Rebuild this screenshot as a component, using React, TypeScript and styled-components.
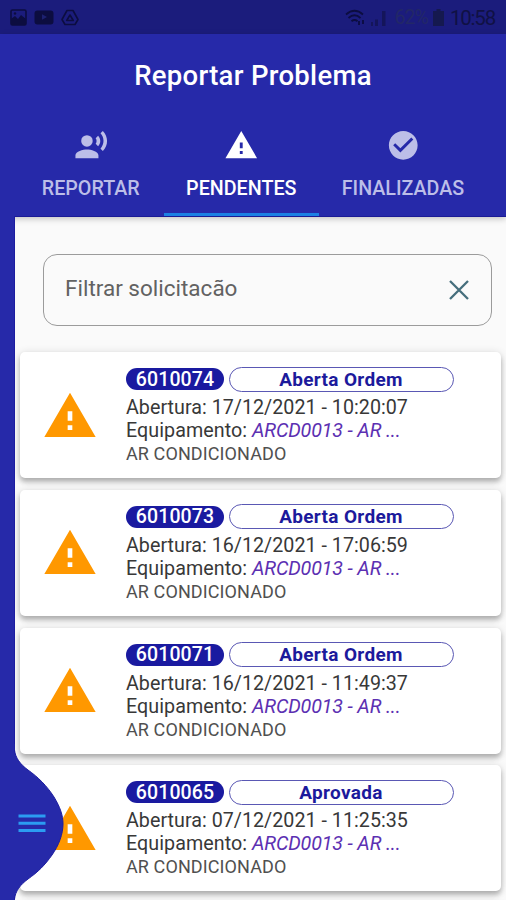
import React from "react";
import styled, { createGlobalStyle, css } from "styled-components";
import { MdRecordVoiceOver, MdWarning, MdCheckCircle } from "react-icons/md";

const GlobalStyle = createGlobalStyle`
  * { box-sizing: border-box; }
  body { margin: 0; overflow: hidden; font-family: Roboto, "Liberation Sans", sans-serif; }
`;

const Screen = styled.div`
  position: relative;
  width: 506px;
  height: 900px;
  overflow: hidden;
  display: flex;
  flex-direction: column;
  background: #fafafa;
`;

const StatusBar = styled.div`
  flex: none;
  height: 34px;
  padding: 1px 11px 0 10px;
  display: flex;
  align-items: center;
  justify-content: space-between;
  background: #1b1c7c;
  color: #0c0d40;
`;

const StatusGroup = styled.div<{ $gap: number }>`
  display: flex;
  align-items: center;
  gap: ${(p) => p.$gap}px;
`;

const Percent = styled.span`
  margin: 0 5px 0 4px;
  font-size: 19.5px;
  letter-spacing: -0.9px;
  color: #222768;
`;

const Clock = styled.span`
  margin-left: 6px;
  font-size: 20.5px;
  letter-spacing: -1.2px;
  color: #101144;
`;

const AppBar = styled.header`
  position: relative;
  z-index: 1;
  flex: none;
  height: 183px;
  display: flex;
  flex-direction: column;
  background: #2629a9;
  border-bottom: 1px solid #1a1a96;
  box-shadow: 0 2px 6px rgba(0, 0, 0, 0.22);
`;

const Title = styled.h1`
  margin: 0;
  height: 83px;
  line-height: 83px;
  text-align: center;
  font-size: 27.5px;
  font-weight: 500;
  letter-spacing: 0.3px;
  color: #fff;
`;

const Tabs = styled.nav`
  display: flex;
  padding-left: 18px;
  height: 99px;
`;

const Tab = styled.div<{ $width: number; $active?: boolean }>`
  width: ${(p) => p.$width}px;
  display: flex;
  flex-direction: column;
  align-items: center;
  padding-top: 11px;
  color: ${(p) => (p.$active ? "#fff" : "#bcbee8")};
  border-bottom: 3px solid ${(p) => (p.$active ? "#1b80e4" : "transparent")};
  svg { width: 34.5px; height: 34.5px; flex: none; }
`;

const TabLabel = styled.span`
  margin-top: 13.5px;
  font-size: 19.7px;
  line-height: 26px;
  font-weight: 500;
`;

const Body = styled.div`
  flex: 1;
  min-height: 0;
  display: flex;
`;

const DrawerEdge = styled.div`
  flex: none;
  width: 15px;
  background: #2629a9;
  border-right: 1px solid #1c1ca0;
  position: relative;
  z-index: 2;
  margin-top: -1px;
`;

const Content = styled.main`
  flex: 1;
  min-width: 0;
  padding: 37px 5px 0;
`;

const SearchField = styled.div`
  height: 72px;
  margin: 0 9px 0 23px;
  padding: 0 21px;
  display: flex;
  align-items: center;
  justify-content: space-between;
  border: 1.5px solid #9b9b9b;
  border-radius: 14px;
  font-size: 22.5px;
  color: #626262;
`;

const Placeholder = styled.span`
  padding-bottom: 4px;
`;

const List = styled.div`
  margin-top: 26px;
  display: flex;
  flex-direction: column;
  gap: 11.8px;
`;

const Card = styled.article`
  flex: none;
  height: 126px;
  display: flex;
  background: #fff;
  border-radius: 5px;
  box-shadow: 0 4px 5px rgba(0, 0, 0, 0.24), 0 1px 8px rgba(0, 0, 0, 0.14);
`;

const CardIcon = styled.div`
  width: 106px;
  padding: 35.5px 0 0 21.5px;
  color: #ff9800;
  svg { width: 56px; height: 56px; display: block; }
`;

const Details = styled.div`
  display: flex;
  flex-direction: column;
  padding-top: 14px;
`;

const Badges = styled.div`
  display: flex;
  align-items: center;
  gap: 5px;
  height: 26px;
`;

const pill = css`
  display: flex;
  align-items: center;
  justify-content: center;
  border-radius: 13px;
  font-weight: 500;
`;

const NumberPill = styled.span`
  ${pill}
  width: 98px;
  height: 22px;
  background: #1a1aa0;
  color: #fff;
  font-size: 19.5px;
  letter-spacing: 0.1px;
`;

const StatePill = styled.span`
  ${pill}
  width: 225px;
  height: 25px;
  padding-right: 1px;
  border: 1px solid #5a58b4;
  color: #1c1a9c;
  font-size: 19px;
  font-weight: 700;
  letter-spacing: 0.33px;
`;

const Line = styled.div<{ $size: number; $height: number; $spacing: number; $color?: string }>`
  font-size: ${(p) => p.$size}px;
  line-height: ${(p) => p.$height}px;
  letter-spacing: ${(p) => p.$spacing}px;
  color: ${(p) => p.$color || "#383838"};
  white-space: nowrap;
`;

const Equipment = styled.em`
  color: #5c30b2;
  letter-spacing: -0.15px;
`;

const Handle = styled.svg`
  position: absolute;
  left: 0;
  top: 744px;
  z-index: 3;
`;

const requests = [
  { id: "6010074", state: "Aberta Ordem", opened: "17/12/2021 - 10:20:07" },
  { id: "6010073", state: "Aberta Ordem", opened: "16/12/2021 - 17:06:59" },
  { id: "6010071", state: "Aberta Ordem", opened: "16/12/2021 - 11:49:37" },
  { id: "6010065", state: "Aprovada", opened: "07/12/2021 - 11:25:35" },
];

const handleCurve =
  "14.500 6C15.500 14 20 20 28 26C38 33 47 42 54 53C60 63 63 71 63 80C63 90 59 101 52 111C45 121 38 128 28 135C20 141 15.500 147 14.500 155";

function StatusIcons() {
  return (
    <StatusGroup $gap={7}>
      <svg width="17" height="17" viewBox="0 0 17 17">
        <rect x="1" y="1" width="15" height="15" rx="1.5" fill="none" stroke="currentColor" strokeWidth="1.6" />
        <path d="M1 10l4-3 3 3 3-4 5 4v6H1z" fill="currentColor" />
        <circle cx="5" cy="4.5" r="1.2" fill="currentColor" />
      </svg>
      <svg width="20" height="15" viewBox="0 0 20 15">
        <rect x="0.5" y="0.5" width="19" height="14" rx="3" fill="currentColor" />
        <path d="M8 4.2v5.6l5-2.8z" fill="#1d2170" />
      </svg>
      <svg width="18" height="17" viewBox="0 0 18 17" fill="none" stroke="currentColor" strokeWidth="1.6" strokeLinejoin="round">
        <path d="M6 1.5h6l5 9-3 5H4l-3-5z" />
        <path d="M9 6l3.3 5.5H5.7z" />
      </svg>
    </StatusGroup>
  );
}

function SystemInfo() {
  return (
    <StatusGroup $gap={0}>
      <svg width="25" height="18" viewBox="0 0 25 18" fill="none" stroke="currentColor" strokeWidth="1.8">
        <path d="M1 5.500Q9.500-2 18 5.500M3.500 9q6-5.500 12 0M6.500 12.300q3-2.500 6 0" />
        <path d="M14 12v4M18 11v4" />
      </svg>
      <svg width="20" height="18" viewBox="0 0 20 18" fill="#14155a">
        <path d="M1 13h2v4H1zM5 10.500h3V17H5zM12 2h3.500v15H12z" />
      </svg>
      <Percent>62%</Percent>
      <svg width="11" height="17" viewBox="0 0 11 17" fill="#15194f">
        <path d="M3.500 0h4v2H11v15H0V2h3.500z" />
      </svg>
      <Clock>10:58</Clock>
    </StatusGroup>
  );
}

export default function App() {
  return (
    <Screen>
      <GlobalStyle />
      <StatusBar>
        <StatusIcons />
        <SystemInfo />
      </StatusBar>
      <AppBar>
        <Title>Reportar Problema</Title>
        <Tabs>
          <Tab $width={145.5}>
            <MdRecordVoiceOver />
            <TabLabel>REPORTAR</TabLabel>
          </Tab>
          <Tab $width={155.5} $active>
            <MdWarning />
            <TabLabel>PENDENTES</TabLabel>
          </Tab>
          <Tab $width={168}>
            <MdCheckCircle />
            <TabLabel>FINALIZADAS</TabLabel>
          </Tab>
        </Tabs>
      </AppBar>
      <Body>
        <DrawerEdge />
        <Content>
          <SearchField>
            <Placeholder>Filtrar solicitacão</Placeholder>
            <svg width="22" height="22" viewBox="0 0 22 22" stroke="#456e7c" strokeWidth="2.3">
              <path d="M2 2l18 18M20 2L2 20" />
            </svg>
          </SearchField>
          <List>
            {requests.map((r) => (
              <Card key={r.id}>
                <CardIcon>
                  <MdWarning />
                </CardIcon>
                <Details>
                  <Badges>
                    <NumberPill>{r.id}</NumberPill>
                    <StatePill>{r.state}</StatePill>
                  </Badges>
                  <Line $size={19.7} $height={31} $spacing={0.02}>Abertura: {r.opened}</Line>
                  <Line $size={19.7} $height={15} $spacing={0.05}>
                    Equipamento: <Equipment>ARCD0013 - AR ...</Equipment>
                  </Line>
                  <Line $size={18} $height={32} $spacing={0.1} $color="#505050">AR CONDICIONADO</Line>
                </Details>
              </Card>
            ))}
            <Card />
          </List>
        </Content>
      </Body>
      <Handle width="68" height="156" viewBox="0 0 68 156">
        <path d={`M0 0H14.500L${handleCurve}V156H0Z`} fill="#2629a9" />
        <path d={`M${handleCurve}`} fill="none" stroke="#1c1ca0" />
        <path d="M18.500 72H45.500M18.500 79.200H45.500M18.500 86.400H45.500" stroke="#2b9cf2" strokeWidth="3" />
      </Handle>
    </Screen>
  );
}
